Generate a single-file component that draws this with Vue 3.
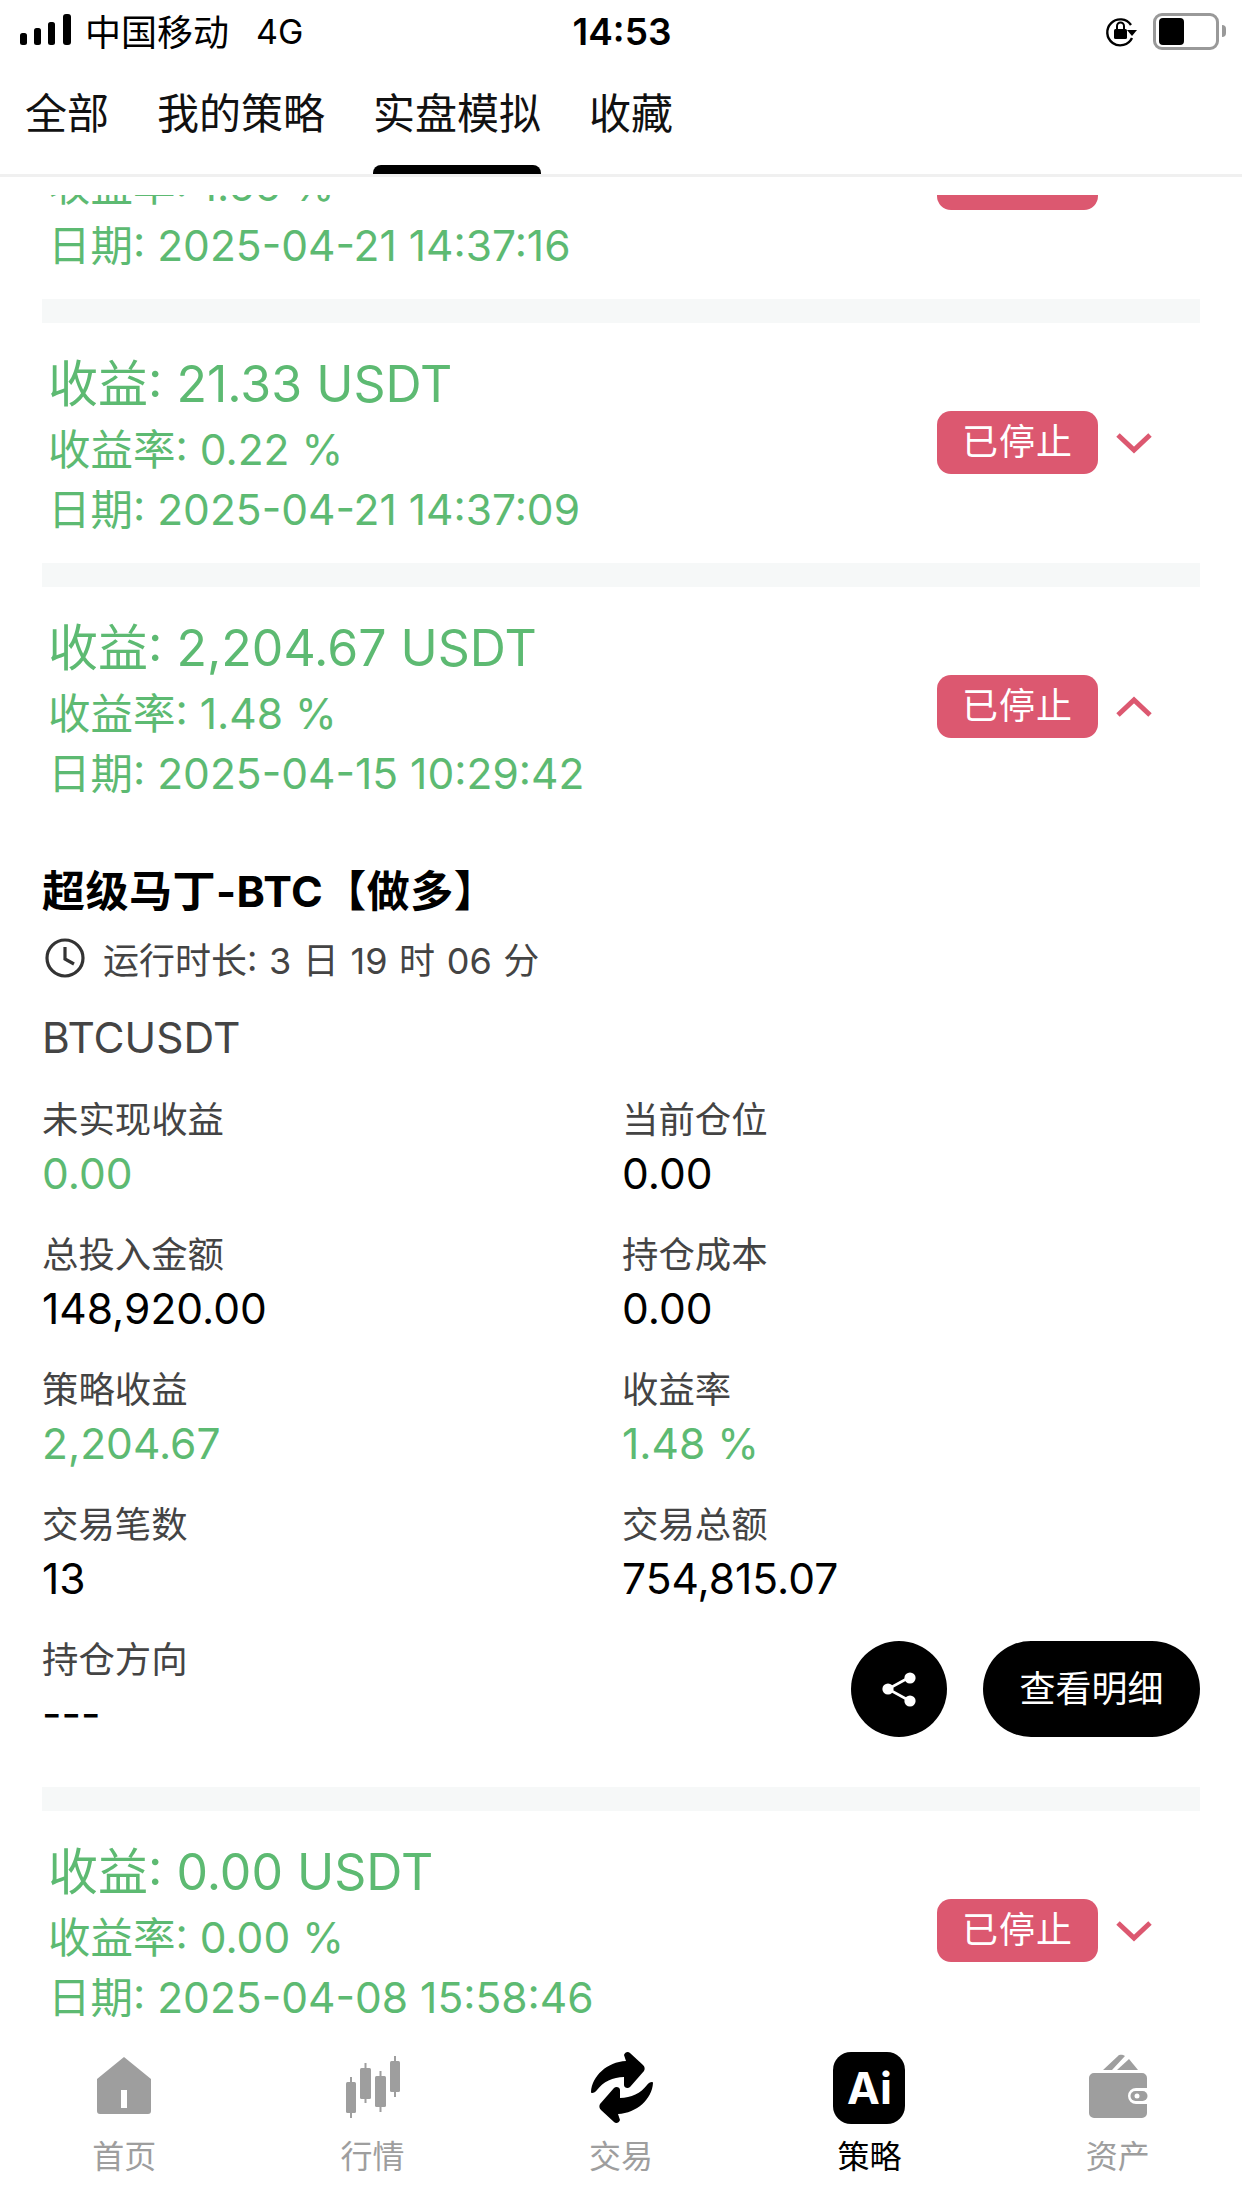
<template>
  <div class="page">
    <div class="status">
      <div class="status-left">
        <svg class="signal" width="52" height="34" viewBox="0 0 52 34">
          <rect x="0" y="19" width="7" height="12" rx="2.5" />
          <rect x="14" y="14" width="7" height="17" rx="2.5" />
          <rect x="28" y="8" width="7" height="23" rx="2.5" />
          <rect x="43" y="0" width="8" height="31" rx="3" />
        </svg>
        <span class="carrier">中国移动</span>
        <span class="net">4G</span>
      </div>
      <div class="time">14:53</div>
      <div class="status-right">
        <svg class="lock" width="34" height="34" viewBox="0 0 34 34">
          <path d="M27 11A13 13 0 1 0 28 24" fill="none" stroke="#000" stroke-width="2.4" />
          <path d="M23 16h10l-5 6z" />
          <rect x="10" y="15" width="13" height="10" rx="1.5" />
          <path d="M13 15v-3a3.5 3.5 0 0 1 7 0v3" fill="none" stroke="#000" stroke-width="2" />
        </svg>
        <div class="battery"><div class="battery-fill"></div></div>
        <div class="battery-nub"></div>
      </div>
    </div>

    <div class="tabs">
      <div v-for="t in tabs" :key="t" class="tab" :class="{ active: t === '实盘模拟' }">{{ t }}</div>
    </div>
    <div class="tabs-gap"></div>

    <div class="scroll">
      <div class="list">
        <template v-for="(r, i) in rows" :key="r.date">
          <div v-if="i > 0" class="gap"></div>
          <div class="row">
            <div class="row-text">
              <div class="profit">收益: {{ r.profit }} USDT</div>
              <div class="line">收益率: {{ r.rate }} %</div>
              <div class="line">日期: {{ r.date }}</div>
            </div>
            <div class="badge">已停止</div>
            <svg class="chevron" width="36" height="22" viewBox="0 0 36 22">
              <path :d="r.open ? 'M2 19L18 4L34 19' : 'M2 3L18 18L34 3'" fill="none" stroke="#dc5870" stroke-width="5" />
            </svg>
          </div>
          <div v-if="r.open" class="detail">
            <div class="detail-title">超级马丁-BTC【做多】</div>
            <div class="duration">
              <svg width="40" height="40" viewBox="0 0 40 40">
                <circle cx="20" cy="20" r="18" fill="none" stroke="#333" stroke-width="3.2" />
                <path d="M20 9v12l9 5" fill="none" stroke="#333" stroke-width="3.2" />
              </svg>
              <span>运行时长: 3 日 19 时 06 分</span>
            </div>
            <div class="symbol">BTCUSDT</div>
            <div class="grid">
              <div v-for="c in cells" :key="c.label" class="cell">
                <div class="cell-label">{{ c.label }}</div>
                <div class="cell-value" :class="{ green: c.green }">{{ c.value }}</div>
              </div>
            </div>
            <div class="last">
              <div class="cell">
                <div class="cell-label">持仓方向</div>
                <div class="cell-value">---</div>
              </div>
              <div class="actions">
                <div class="share">
                  <svg width="40" height="40" viewBox="0 0 40 40">
                    <path d="M31 8L9 20L31 32" fill="none" stroke="#fff" stroke-width="2.6" />
                    <circle cx="31" cy="9" r="5.6" fill="#fff" />
                    <circle cx="9" cy="20" r="5.6" fill="#fff" />
                    <circle cx="31" cy="32" r="5.6" fill="#fff" />
                  </svg>
                </div>
                <div class="more">查看明细</div>
              </div>
            </div>
          </div>
        </template>
      </div>
    </div>

    <div class="nav">
      <div class="nav-item">
        <svg class="nav-icon" viewBox="0 0 80 80">
          <path fill-rule="evenodd" d="M40 9L67 31V63a3 3 0 0 1-3 3H16a3 3 0 0 1-3-3V31ZM37 42v18h6V42Z" fill="#9e9e9e" />
        </svg>
        <span>首页</span>
      </div>
      <div class="nav-item">
        <svg class="nav-icon" viewBox="0 0 80 80" fill="#9e9e9e">
          <rect x="13" y="34" width="10" height="31" rx="1.5" /><rect x="17" y="29" width="2" height="41" />
          <rect x="27" y="20" width="11" height="31" rx="1.5" /><rect x="31.500" y="15" width="2" height="40" />
          <rect x="42" y="28" width="11" height="31" rx="1.5" /><rect x="46.500" y="23" width="2" height="41" />
          <rect x="57" y="13" width="10" height="31" rx="1.5" /><rect x="61" y="8" width="2" height="41" />
        </svg>
        <span>行情</span>
      </div>
      <div class="nav-item">
        <svg class="nav-icon" viewBox="10 8 80 80">
          <path d="M20 52C21 36 36 22 55 21L53 15C54 12 57 11 59 13L72 25C74 27 74 29 73 31L59 47C57 49 53 48 53 45L53 37C42 37 32 42 26 50C24 53 20 54 20 52Z" />
          <path d="M82 43C81 59 66 73 47 74L49 80C48 83 45 84 43 82L30 70C28 68 28 66 29 64L43 48C45 46 49 47 49 50L49 58C60 58 70 53 76 45C78 42 82 41 82 43Z" />
        </svg>
        <span>交易</span>
      </div>
      <div class="nav-item on">
        <div class="nav-icon ai"><span>Ai</span></div>
        <span>策略</span>
      </div>
      <div class="nav-item">
        <svg class="nav-icon" viewBox="8 8 80 80" fill="#9e9e9e">
          <path d="M33 30L48 16C50 14 53 15 55 16L42 30Z" />
          <path d="M47 30L59 19L68 30Z" />
          <path d="M24 33H72A5 5 0 0 1 77 38V48H66A8 8 0 0 0 66 64H77V73A5 5 0 0 1 72 78H24A5 5 0 0 1 19 73V38A5 5 0 0 1 24 33Z" />
          <rect x="60.500" y="51" width="17" height="10" rx="5" />
          <circle cx="67" cy="56" r="2.500" fill="#fff" />
        </svg>
        <span>资产</span>
      </div>
    </div>
  </div>
</template>

<script setup>
const tabs = ['全部', '我的策略', '实盘模拟', '收藏']

const rows = [
  { profit: '142.16', rate: '1.66', date: '2025-04-21 14:37:16' },
  { profit: '21.33', rate: '0.22', date: '2025-04-21 14:37:09' },
  { profit: '2,204.67', rate: '1.48', date: '2025-04-15 10:29:42', open: true },
  { profit: '0.00', rate: '0.00', date: '2025-04-08 15:58:46' }
]

const cells = [
  { label: '未实现收益', value: '0.00', green: true },
  { label: '当前仓位', value: '0.00' },
  { label: '总投入金额', value: '148,920.00' },
  { label: '持仓成本', value: '0.00' },
  { label: '策略收益', value: '2,204.67', green: true },
  { label: '收益率', value: '1.48 %', green: true },
  { label: '交易笔数', value: '13' },
  { label: '交易总额', value: '754,815.07' }
]
</script>

<style>
html,
body {
  margin: 0;
  background: #fff;
}
</style>

<style scoped>
.page {
  width: 1242px;
  height: 2208px;
  display: flex;
  flex-direction: column;
  background: #fff;
  overflow: hidden;
  font-family: Inter, "Noto Sans CJK SC", sans-serif;
  color: #000;
}
.status {
  height: 62px;
  flex: none;
  display: grid;
  grid-template-columns: 1fr auto 1fr;
  align-items: center;
  padding: 0 16px 0 20px;
}
.status-left {
  display: flex;
  align-items: center;
}
.signal {
  margin-right: 13px;
}
.carrier {
  font-size: 36px;
  margin-bottom: 2px;
}
.net {
  font-size: 34px;
  margin-left: 27px;
}
.time {
  font-size: 37px;
  font-weight: 600;
  margin-left: -2px;
}
.status-right {
  display: flex;
  align-items: center;
  justify-content: flex-end;
}
.lock {
  margin-right: 15px;
}
.battery {
  width: 54px;
  height: 27px;
  border: 3px solid #999;
  border-radius: 9px;
  padding: 2px 3px;
  display: flex;
  box-sizing: content-box;
}
.battery-fill {
  width: 25px;
  background: #000;
  border-radius: 4px;
}
.battery-nub {
  width: 4px;
  height: 12px;
  background: #999;
  margin-left: 3px;
  border-radius: 0 4px 4px 0;
}
.tabs {
  flex: none;
  height: 112px;
  display: flex;
  gap: 48px;
  padding: 0 25px;
  border-bottom: 3px solid #f0f0f0;
}
.tab {
  font-size: 42px;
  line-height: 104px;
  height: 112px;
  color: #111;
  position: relative;
}
.tab.active::after {
  content: "";
  position: absolute;
  left: 0;
  right: 0;
  bottom: 0;
  height: 9px;
  background: #000;
  border-radius: 8px 8px 0 0;
}
.tabs-gap {
  flex: none;
  height: 18px;
}
.scroll {
  flex: 1;
  min-height: 0;
  overflow: hidden;
}
.list {
  margin-top: -136px;
  padding: 0 42px;
}
.gap {
  height: 24px;
  background: #f6f8f8;
}
.row {
  height: 240px;
  box-sizing: border-box;
  padding: 28px 48px 0 6px;
  display: flex;
  align-items: center;
  color: #5dba72;
}
.row-text {
  flex: 1;
  align-self: flex-start;
}
.profit {
  font-size: 50px;
  line-height: 66px;
  margin-bottom: 3px;
}
.line {
  font-size: 42.5px;
  line-height: 60px;
}
.badge {
  width: 161px;
  height: 63px;
  margin-top: -29px;
  background: #dc5870;
  border-radius: 14px;
  color: #fff;
  font-size: 36px;
  letter-spacing: 1px;
  line-height: 63px;
  text-align: center;
}
.chevron {
  margin: -29px 0 0 18px;
}
.detail {
  height: 960px;
  box-sizing: border-box;
}
.detail-title {
  font-size: 43px;
  letter-spacing: 0.5px;
  font-weight: 700;
  line-height: 60px;
  padding-top: 34px;
}
.duration {
  display: flex;
  align-items: center;
  gap: 18px;
  height: 60px;
  margin-top: 7px;
  padding-left: 3px;
  font-size: 36px;
  word-spacing: 1.5px;
  color: #444;
}
.symbol {
  font-size: 42.5px;
  line-height: 60px;
  margin-top: 20px;
  color: #444;
}
.grid {
  display: grid;
  grid-template-columns: 580px 1fr;
  margin-top: 27px;
}
.cell {
  height: 135px;
}
.cell-label {
  font-size: 36.4px;
  line-height: 50px;
  color: #444;
}
.cell-value {
  font-size: 42.5px;
  line-height: 58px;
}
.green {
  color: #5dba72;
}
.last {
  display: flex;
  justify-content: space-between;
  align-items: flex-start;
}
.actions {
  display: flex;
  gap: 36px;
  padding-top: 6px;
}
.share {
  width: 96px;
  height: 96px;
  border-radius: 50%;
  background: #000;
  display: flex;
  align-items: center;
  justify-content: center;
}
.more {
  width: 217px;
  height: 96px;
  border-radius: 48px;
  background: #000;
  color: #fff;
  font-size: 36px;
  line-height: 96px;
  text-align: center;
}
.nav {
  flex: none;
  height: 178px;
  box-sizing: border-box;
  padding-top: 18px;
  display: grid;
  grid-template-columns: repeat(5, 1fr);
  background: #fff;
}
.nav-item {
  display: flex;
  flex-direction: column;
  align-items: center;
  font-size: 32px;
  line-height: 42px;
  color: #9e9e9e;
  gap: 8px;
}
.nav-item.on {
  color: #000;
}
.nav-icon {
  width: 80px;
  height: 80px;
  display: block;
}
.ai {
  width: 72px;
  height: 72px;
  margin: 4px;
  background: #000;
  border-radius: 18px;
  color: #fff;
  font-size: 44px;
  font-weight: 700;
  line-height: 72px;
  text-align: center;
}
</style>
